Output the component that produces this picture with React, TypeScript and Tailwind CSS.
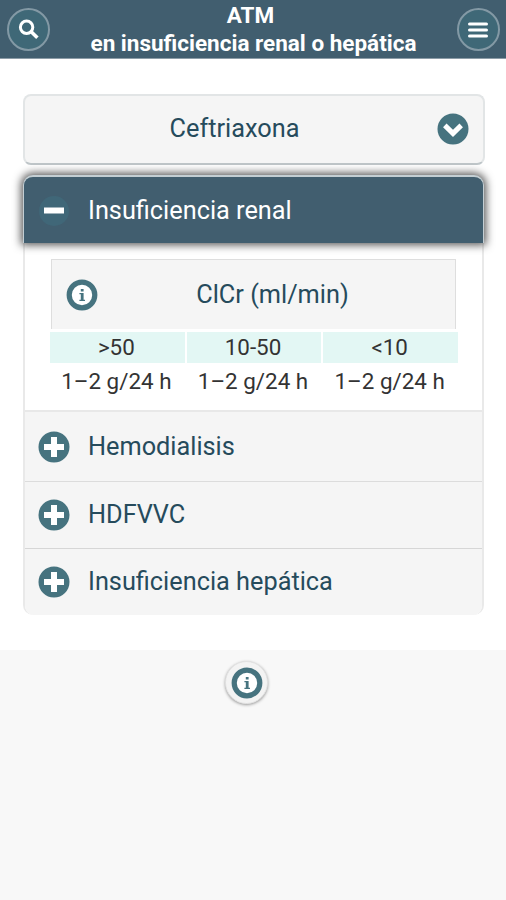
import { useState } from "react";

function SearchIcon() {
    return (
        <svg width="22" height="22" viewBox="0 0 22 22" fill="none" stroke="#fff">
            <circle cx="8.6" cy="8.2" r="6.2" strokeWidth="3" />
            <path d="M13.2 12.8L19.4 18.8" strokeWidth="3.6" />
        </svg>
    );
}

function MenuIcon() {
    return (
        <svg width="22" height="22" viewBox="0 0 22 22" stroke="#fff" strokeWidth="3" strokeLinecap="round">
            <path d="M2.5 5h17M2.5 11h17M2.5 17h17" />
        </svg>
    );
}

function PlusIcon() {
    return (
        <svg className="shrink-0" width="32" height="32" viewBox="0 0 32 32">
            <circle cx="16" cy="16" r="15.5" fill="#46737f" />
            <path d="M6 16h20M16 6v20" stroke="#fff" strokeWidth="6" />
        </svg>
    );
}

function MinusIcon() {
    return (
        <svg className="shrink-0" width="32" height="32" viewBox="0 0 32 32">
            <circle cx="16" cy="16" r="15" fill="#406778" />
            <path d="M6 15.5h20" stroke="#fff" strokeWidth="6" />
        </svg>
    );
}

function ChevronIcon() {
    return (
        <svg width="32" height="32" viewBox="0 0 32 32" fill="none">
            <circle cx="16" cy="16" r="15.5" fill="#46737f" />
            <path d="M7.8 12.4L16 20.4L24.2 12.4" stroke="#fff" strokeWidth="5" />
        </svg>
    );
}

function InfoIcon() {
    return (
        <svg width="32" height="32" viewBox="0 0 32 32">
            <circle cx="16" cy="16" r="12.8" fill="#fff" stroke="#46737f" strokeWidth="5.2" />
            <path d="M14.8 10h2.8v2.6h-2.8zM13.4 14h4.2v6.8h1.4v1.2h-5.6v-1.2h1.4v-5.6h-1.4z" fill="#46737f" />
        </svg>
    );
}

const doses = [
    { range: ">50", dose: "1–2 g/24 h" },
    { range: "10-50", dose: "1–2 g/24 h" },
    { range: "<10", dose: "1–2 g/24 h" },
];

const sections = [
    { title: "Hemodialisis", className: "h-[71px] border-t-2 border-[#e8e8e8]" },
    { title: "HDFVVC", className: "h-[67px] border-t border-[#dcdcdc]" },
    { title: "Insuficiencia hepática", className: "h-[67px] border-t border-[#d6d6d6]" },
];

export default function App() {
    const [open, setOpen] = useState(true);

    return (
        <div className="min-h-[900px] w-full bg-[#f8f8f8] font-[Roboto,sans-serif] text-[#264b5c]">
            <header className="flex h-[59px] items-center justify-between border-b border-[#8c9ca7] bg-[#415e6f] pt-px pr-[6px] pl-[7px]">
                <button className="flex size-[43px] items-center justify-center rounded-full border-2 border-[#8399a5] bg-[#3f6877]">
                    <SearchIcon />
                </button>
                <h1 className="pb-[2px] text-center text-[22.5px] leading-[28px] font-bold text-white">
                    <span className="pr-[6px]">ATM</span>
                    <br />
                    en insuficiencia renal o hepática
                </h1>
                <button className="flex size-[43px] items-center justify-center rounded-full border-2 border-[#8399a5] bg-[#3f6877]">
                    <MenuIcon />
                </button>
            </header>

            <main className="h-[591px] bg-white px-[23px] pt-[35px]">
                <button className="flex h-[71px] w-[462px] items-center rounded-[8px] border-2 border-[#e2e5e6] border-b-[#bfc6c9] bg-[#f5f5f5] pr-[14px] pb-px pl-[7px]">
                    <span className="flex-1 text-center text-[25.3px] leading-8">Ceftriaxona</span>
                    <ChevronIcon />
                </button>

                <div className="mt-[10px] w-[461px]">
                    <button
                        onClick={() => setOpen(!open)}
                        className="relative flex h-[68px] w-full items-center gap-[18px] rounded-t-[10px] border-x border-t-2 border-[#c3ced3] bg-[#415e6f] pt-px pl-[14px] text-white shadow-[0_0_9px_2px_#555]"
                    >
                        <MinusIcon />
                        <span className="text-[25.3px] leading-8">Insuficiencia renal</span>
                    </button>
                    <div className="overflow-hidden rounded-b-[10px] border-x-2 border-[#e9e9e9]">
                        {open && (
                            <div className="h-[167px] pt-[16px] pl-[25px]">
                                <div className="ml-px flex h-[70px] w-[405px] items-center border-[1.5px] border-b-0 border-[#dedede] bg-[#f5f5f5] pl-[14px]">
                                    <InfoIcon />
                                    <span className="flex-1 pr-[8px] text-center text-[25.3px] leading-8">ClCr (ml/min)</span>
                                </div>
                                <div className="mt-[3px] grid w-[408px] grid-cols-3 gap-x-[2px] text-center text-[22.4px] text-[#333]">
                                    {doses.map((d) => (
                                        <div key={d.range}>
                                            <p className="h-[31px] bg-[#e3f7f4] pr-[2px] leading-[31px]">{d.range}</p>
                                            <p className="h-[36px] pr-[2px] leading-[36px] whitespace-nowrap">{d.dose}</p>
                                        </div>
                                    ))}
                                </div>
                            </div>
                        )}
                        {sections.map((s) => (
                            <div key={s.title} className={`flex items-center gap-[18px] bg-[#f5f5f5] pl-[13px] ${s.className}`}>
                                <PlusIcon />
                                <span className="text-[25.3px] leading-8">{s.title}</span>
                            </div>
                        ))}
                    </div>
                </div>
            </main>

            <footer className="flex justify-center pt-[11px] pr-[13px]">
                <button className="flex size-[43px] items-center justify-center rounded-full border border-[#e2e2e2] bg-[#f3f3f3] shadow-[0_1px_3px_#999]">
                    <InfoIcon />
                </button>
            </footer>
        </div>
    );
}
